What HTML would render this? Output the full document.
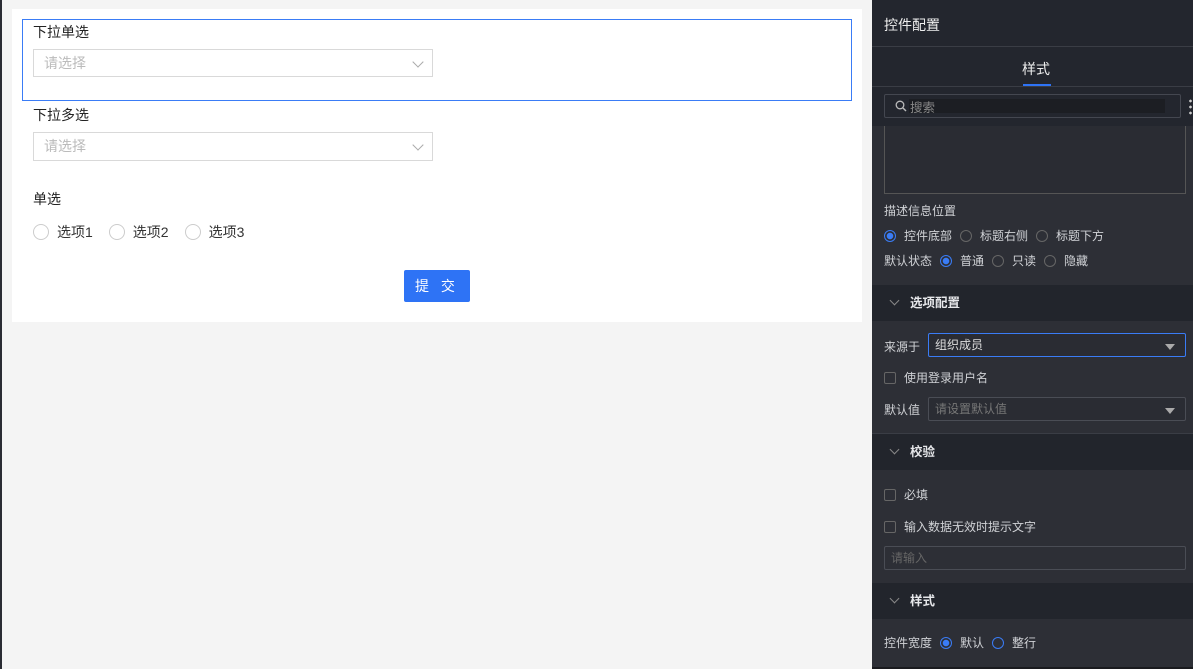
<!DOCTYPE html>
<html><head><meta charset="utf-8"><style>
*{margin:0;padding:0;box-sizing:border-box}
body{width:1193px;height:669px;overflow:hidden;background:#f4f4f4;font-family:"Liberation Sans","Noto Sans CJK SC",sans-serif;position:relative;font-size:14px}
.a{position:absolute}
.lbl{color:#222;font-size:14px}
.sel{border:1px solid #d9d9d9;background:#fff;color:#bbb;padding-left:10px;line-height:26px;font-size:14px}
.chev{position:absolute;right:10px;top:8px;width:8px;height:8px;border-right:1px solid #aaa;border-bottom:1px solid #aaa;transform:rotate(45deg)}
.rad{width:16px;height:16px;border:1px solid #ccc;border-radius:50%;display:inline-block;vertical-align:middle}
.p{color:#d0d2d6;font-size:12px}
.dr{width:12px;height:12px;border:1px solid #666;border-radius:50%;display:inline-block;vertical-align:-2px;margin-right:8px}
.dr.on{border-color:#3a7cf6;background:radial-gradient(circle,#3a7cf6 3px,transparent 3.5px)}
.g{display:inline-block;width:8px}
.cb{width:12px;height:12px;border:1px solid #666;border-radius:2px;display:inline-block;vertical-align:-2px;margin-right:8px}
.sh{left:872px;width:321px;background:#22252c;color:#e6e7ea;font-size:12.5px;font-weight:bold}
.sh i{position:absolute;left:19px;top:12px;width:7px;height:7px;border-right:1px solid #888;border-bottom:1px solid #888;transform:rotate(45deg)}
.sh span{position:absolute;left:38px}
.tri{position:absolute;right:10px;top:10px;border:5px solid transparent;border-top:6px solid #aaa}
</style></head><body>
<div class="a" style="left:0;top:0;width:2px;height:669px;background:#2a2c33"></div>
<div class="a" style="left:12px;top:9px;width:850px;height:313px;background:#fff"></div>
<div class="a" style="left:22px;top:19px;width:830px;height:82px;border:1px solid #3a7cf6"></div>
<div class="a lbl" style="left:33px;top:22px">下拉单选</div>
<div class="a sel" style="left:33px;top:49px;width:400px;height:28px">请选择<i class="chev"></i></div>
<div class="a lbl" style="left:33px;top:105px">下拉多选</div>
<div class="a sel" style="left:33px;top:132px;width:400px;height:29px">请选择<i class="chev"></i></div>
<div class="a lbl" style="left:33px;top:189px">单选</div>
<div class="a lbl" style="left:33px;top:222px;color:#333;white-space:nowrap"><span class="rad"></span><span style="vertical-align:middle;margin:0 16px 0 8px">选项1</span><span class="rad"></span><span style="vertical-align:middle;margin:0 16px 0 8px">选项2</span><span class="rad"></span><span style="vertical-align:middle;margin-left:8px">选项3</span></div>
<div class="a" style="left:404px;top:270px;width:66px;height:32px;background:#2e73f5;border-radius:2px;color:#fff;text-align:center;line-height:32px;font-size:14px;letter-spacing:4px">提 交</div>

<div class="a" style="left:872px;top:0;width:321px;height:669px;background:#2d2f36"></div>
<div class="a" style="left:872px;top:0;width:321px;height:126px;background:#23262e"></div>
<div class="a" style="left:872px;top:46px;width:321px;height:1px;background:#3a3d45"></div>
<div class="a" style="left:872px;top:86px;width:321px;height:1px;background:#3a3d45"></div>
<div class="a" style="left:884px;top:15px;color:#eee;font-size:14px">控件配置</div>
<div class="a" style="left:1022px;top:59px;color:#eee;font-size:14px">样式</div>
<div class="a" style="left:1023px;top:84px;width:28px;height:2px;background:#2e73f5"></div>
<div class="a" style="left:884px;top:94px;width:297px;height:24px;border:1px solid #444750;border-radius:2px;background:#23262e"><div class="a" style="left:24px;top:4px;width:256px;height:14px;background:#1c1e23"></div><svg class="a" style="left:10px;top:5px" width="12" height="12"><circle cx="5" cy="5" r="3.8" fill="none" stroke="#bbb" stroke-width="1.3"/><path d="M8 8l3 3" stroke="#bbb" stroke-width="1.4"/></svg><span class="a" style="left:25px;top:2px;color:#888;font-size:12.5px">搜索</span></div>
<div class="a" style="left:1189px;top:98px;width:3px;height:18px;background:radial-gradient(circle,#ccc 1.2px,transparent 1.5px) 0 0/3px 6px"></div>
<div class="a" style="left:884px;top:126px;width:302px;height:68px;border:1px solid #555;border-top:none;background:#2a2c33"></div>
<div class="a p" style="left:884px;top:202px">描述信息位置</div>
<div class="a p" style="left:884px;top:227px;white-space:nowrap"><span class="dr on"></span>控件底部<span class="g"></span><span class="dr"></span>标题右侧<span class="g"></span><span class="dr"></span>标题下方</div>
<div class="a p" style="left:884px;top:252px;white-space:nowrap">默认状态<span class="g"></span><span class="dr on"></span>普通<span class="g"></span><span class="dr"></span>只读<span class="g"></span><span class="dr"></span>隐藏</div>
<div class="a sh" style="top:285px;height:36px;line-height:36px"><i></i><span>选项配置</span></div>
<div class="a p" style="left:884px;top:338px">来源于</div>
<div class="a" style="left:928px;top:333px;width:258px;height:24px;border:1px solid #3a7cf6;border-radius:2px;background:#2a2c33;color:#ddd;font-size:12px;padding-left:6px;line-height:22px">组织成员<i class="tri"></i></div>
<div class="a p" style="left:884px;top:369px"><span class="cb"></span>使用登录用户名</div>
<div class="a p" style="left:884px;top:401px">默认值</div>
<div class="a" style="left:928px;top:397px;width:258px;height:24px;border:1px solid #4a4d55;border-radius:2px;background:#2a2c33;color:#777;font-size:12px;padding-left:6px;line-height:22px">请设置默认值<i class="tri"></i></div>
<div class="a" style="left:872px;top:433px;width:321px;height:1px;background:#3a3d45"></div>
<div class="a sh" style="top:434px;height:36px;line-height:36px"><i></i><span>校验</span></div>
<div class="a p" style="left:884px;top:486px"><span class="cb"></span>必填</div>
<div class="a p" style="left:884px;top:518px"><span class="cb"></span>输入数据无效时提示文字</div>
<div class="a" style="left:884px;top:546px;width:302px;height:24px;border:1px solid #4a4d55;border-radius:2px;color:#666;font-size:12px;padding-left:6px;line-height:22px">请输入</div>
<div class="a sh" style="top:583px;height:36px;line-height:36px"><i></i><span>样式</span></div>
<div class="a p" style="left:884px;top:634px;white-space:nowrap">控件宽度<span class="g"></span><span class="dr on"></span>默认<span class="g"></span><span class="dr" style="border-color:#3a7cf6"></span>整行</div>
<div class="a" style="left:872px;top:667px;width:321px;height:2px;background:#1a1b1f"></div>
</body></html>
